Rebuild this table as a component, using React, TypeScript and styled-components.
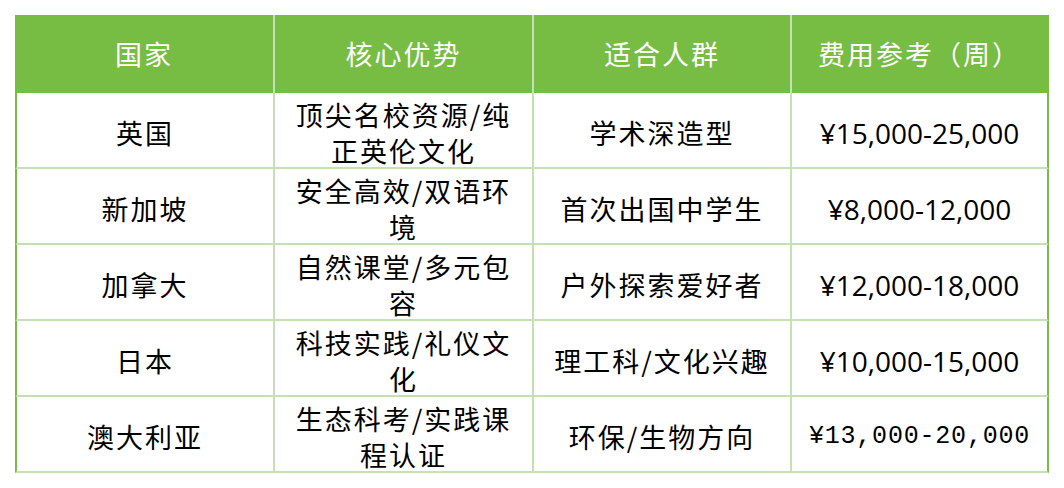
import React from "react";
import styled, { createGlobalStyle } from "styled-components";

const colors = {
  green: "#77bc43",
  line: "#c5e0b4",
  white: "#ffffff",
  black: "#000000",
};

interface RowData {
  country: string;
  strength: string;
  audience: string;
  price: string;
  mono?: boolean;
}

const heads = ["国家", "核心优势", "适合人群", "费用参考（周）"];

const rows: RowData[] = [
  { country: "英国", strength: "顶尖名校资源/纯正英伦文化", audience: "学术深造型", price: "¥15,000-25,000" },
  { country: "新加坡", strength: "安全高效/双语环境", audience: "首次出国中学生", price: "¥8,000-12,000" },
  { country: "加拿大", strength: "自然课堂/多元包容", audience: "户外探索爱好者", price: "¥12,000-18,000" },
  { country: "日本", strength: "科技实践/礼仪文化", audience: "理工科/文化兴趣", price: "¥10,000-15,000" },
  { country: "澳大利亚", strength: "生态科考/实践课程认证", audience: "环保/生物方向", price: "¥13,000-20,000", mono: true },
];

const App: React.FC = () => {
  return (
    <Page>
      <GlobalStyle />
      <Table>
        {heads.map((h, i) => (
          <HeadCell key={h} $last={i === heads.length - 1}>
            {h}
          </HeadCell>
        ))}
        {rows.map((r) => (
          <React.Fragment key={r.country}>
            <Cell $first>{r.country}</Cell>
            <Cell>{r.strength}</Cell>
            <Cell>{r.audience}</Cell>
            <Cell $last>
              <Price $mono={r.mono}>{r.price}</Price>
            </Cell>
          </React.Fragment>
        ))}
      </Table>
    </Page>
  );
};

export default App;

const GlobalStyle = createGlobalStyle`
  body {
    margin: 0;
    background: ${colors.white};
  }
`;

const Page = styled.div`
  padding: 15px;
`;

const Table = styled.div`
  display: grid;
  grid-template-columns: 260px 259px 258px 257px;
  grid-template-rows: 78px repeat(5, 76px);
  width: 1034px;
  font-family: "Noto Sans CJK SC", sans-serif;
  font-size: 27px;
  line-height: 36px;
  letter-spacing: 2px;
`;

const HeadCell = styled.div<{ $last?: boolean }>`
  display: flex;
  align-items: center;
  justify-content: center;
  box-sizing: border-box;
  background: ${colors.green};
  color: ${colors.white};
  border-right: 2px solid ${(p) => (p.$last ? colors.green : colors.line)};
`;

const Cell = styled.div<{ $first?: boolean; $last?: boolean }>`
  display: flex;
  align-items: center;
  justify-content: center;
  box-sizing: border-box;
  padding: 5px 12px 0;
  text-align: center;
  color: ${colors.black};
  border-left: ${(p) => (p.$first ? `2px solid ${colors.green}` : "none")};
  border-right: 2px solid ${(p) => (p.$last ? colors.green : colors.line)};
  border-bottom: 2px solid ${colors.line};
`;

const Price = styled.span<{ $mono?: boolean }>`
  font-family: ${(p) =>
    p.$mono ? `"Liberation Mono", monospace` : `"Open Sans", sans-serif`};
  font-size: ${(p) => (p.$mono ? "25px" : "28px")};
  letter-spacing: ${(p) => (p.$mono ? "0.8px" : "0")};
  white-space: nowrap;
`;
